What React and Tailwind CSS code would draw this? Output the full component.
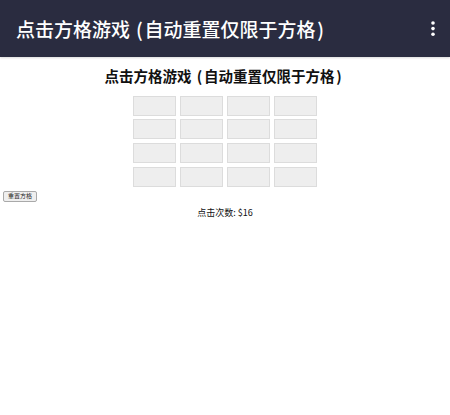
function Title() {
  return (
    <>
      点击方格游戏 <span className="mx-[1.75px]">(</span>自动重置仅限于方格<span className="mx-[1.75px]">)</span>
    </>
  );
}

export default function App() {
  const cells = Array.from({ length: 16 });
  const font = { fontFamily: '"Noto Sans CJK SC", "Noto Sans", sans-serif' };
  return (
    <div className="w-[450px] h-[415px] bg-white" style={font}>
      <div className="h-[57px] bg-[#2a2c40] flex items-center justify-between pl-[16px] pr-[14px] shadow-[0_1px_2px_rgba(0,0,0,0.15)]">
        <div className="text-white text-[19px] font-medium leading-none"><Title /></div>
        <svg width="6" height="18" viewBox="0 0 6 18">
          <circle cx="3" cy="3" r="1.8" fill="white" />
          <circle cx="3" cy="8.6" r="1.8" fill="white" />
          <circle cx="3" cy="14.2" r="1.8" fill="white" />
        </svg>
      </div>
      <div className="flex flex-col">
        <div className="text-center text-[14.5px] font-bold text-[#111] leading-none mt-[12px] pr-[2px]"><Title /></div>
        <div className="flex justify-center mt-[12px]">
          <div className="grid grid-cols-[repeat(4,43px)] auto-rows-[20px] gap-x-[4px] gap-y-[3.7px]">
            {cells.map((_, i) => (
              <div key={i} className="bg-[#eeeeee] border border-[#dcdcdc]" />
            ))}
          </div>
        </div>
        <div className="flex mt-[4px] pl-[3px]">
          <button className="text-[6px] leading-none px-[4px] h-[11px] border border-[#a9a9a9] bg-[#efefef] rounded-[2px] text-[#222]">重置方格</button>
        </div>
        <div className="text-center text-[9px] text-[#111] leading-none mt-[6px]">点击次数: $16</div>
      </div>
    </div>
  );
}
